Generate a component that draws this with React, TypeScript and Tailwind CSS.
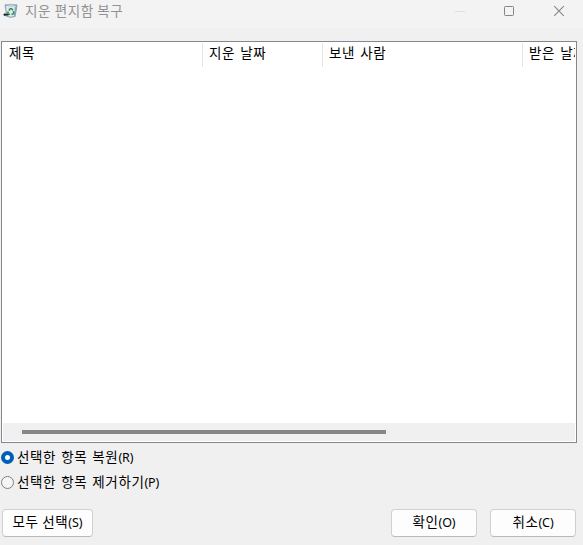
import { useState } from 'react';

const columns = [
  { title: '제목', className: 'w-[200px] border-r' },
  { title: '지운 날짜', className: 'w-[120px] border-r' },
  { title: '보낸 사람', className: 'w-[200px] border-r' },
  { title: '받은 날짜', className: 'w-[120px]' },
];

const options = [
  { value: 'restore', label: '선택한 항목 복원', shortcut: '(R)' },
  { value: 'remove', label: '선택한 항목 제거하기', shortcut: '(P)' },
];

function Label({ text, shortcut }: { text: string; shortcut: string }) {
  return (
    <span className="flex items-baseline whitespace-nowrap">
      <span>{text}</span>
      <span className="font-['Noto_Sans',sans-serif] text-[12.5px] tracking-[-0.1px]">{shortcut}</span>
    </span>
  );
}

function DialogButton({ text, shortcut, className }: { text: string; shortcut: string; className: string }) {
  return (
    <button
      className={`flex h-7 items-center justify-center rounded-[4px] border border-[#d0d0d0] border-b-[#bababa] bg-[#fdfdfd] pb-[2px] ${className}`}
    >
      <Label text={text} shortcut={shortcut} />
    </button>
  );
}

function RecycleBinIcon() {
  return (
    <svg width="16" height="16" viewBox="0 0 16 16" fill="none">
      <path d="M2 2 L14 2 L12 13.5 Q8 15 4 13.5 Z" fill="#dce8ee" stroke="#8799ab" />
      <path d="M2 2.2 Q8 .3 14 2.2 Q8 4 2 2.2Z" fill="#f8fbfd" stroke="#91a3b1" strokeWidth=".8" />
      <path d="M11.8 4 L14 2.5 L12.3 13.5 L11 14Z" fill="#8ea6c0" />
      <path d="M5.9 7.5 L7.2 5.7 H8.7 L9.8 7.3 M10.3 8.3 L11 10 L9.8 11.2 H8.5 M7 11.2 H5.2 L4.7 10 L5.4 8.6" stroke="#2f934b" strokeWidth="1.5" />
      <path d="M0 11.7 L2.5 9.8 V11 H5.5 V12.5 H2.5 V13.6Z" fill="#222b31" />
    </svg>
  );
}

export default function App() {
  const [selected, setSelected] = useState('restore');

  return (
    <div className="flex h-[545px] w-[583px] flex-col overflow-hidden bg-[#f0f0f0] font-['Noto_Sans_CJK_KR',sans-serif] text-[13.5px] leading-5 tracking-[0.6px] text-black [word-spacing:1.5px]">
      <header className="flex h-7 shrink-0 items-start bg-[#f3f3f3]">
        <div className="flex pt-[3px] pl-[3px]">
          <RecycleBinIcon />
        </div>
        <h1 className="ml-[6px] text-[#929292] [word-spacing:0px]">지운 편지함 복구</h1>
        <div className="mt-[5px] mr-[18px] ml-auto flex gap-[38px]">
          {/* minimize is disabled in this dialog */}
          <svg width="12" height="12" viewBox="0 0 12 12">
            <path d="M2 6.5H12" stroke="#dfdfdf" />
          </svg>
          <svg width="12" height="12" viewBox="0 0 12 12" fill="none">
            <rect x="1.5" y="1.5" width="9" height="9" rx=".8" stroke="#858585" />
          </svg>
          <svg width="12" height="12" viewBox="0 0 12 12">
            <path d="M1.2 1.2L10.8 10.8M10.8 1.2L1.2 10.8" stroke="#858585" strokeWidth="1.1" />
          </svg>
        </div>
      </header>

      <div className="mt-[13px] ml-px flex h-[402px] w-[576px] shrink-0 flex-col overflow-hidden border border-[#828790] bg-white p-px">
        <div className="flex h-6 overflow-hidden leading-[18px]">
          {columns.map((column) => (
            <div
              key={column.title}
              className={`shrink-0 border-[#e5e5e5] pl-[6px] whitespace-nowrap ${column.className}`}
            >
              {column.title}
            </div>
          ))}
        </div>
        <div className="mt-auto h-[18px] shrink-0 bg-[#f0f0f0] pt-[7px] pl-[19px]">
          <div className="h-1 w-[364px] bg-[#868686]" />
        </div>
      </div>

      <div className="ml-px flex flex-col gap-[5px] pt-1">
        {options.map((option) => (
          <label key={option.value} className="flex h-5 items-center gap-[3px]">
            <input
              type="radio"
              name="action"
              value={option.value}
              checked={selected === option.value}
              onChange={() => setSelected(option.value)}
              className="size-[13px] appearance-none rounded-full border border-[#808080] bg-[#f5f5f5] checked:border-4 checked:border-[#005fb8] checked:bg-white"
            />
            <Label text={option.label} shortcut={option.shortcut} />
          </label>
        ))}
      </div>

      <footer className="mt-[17px] flex pr-[7px] pl-[2px]">
        <DialogButton text="모두 선택" shortcut="(S)" className="w-[91px]" />
        <DialogButton text="확인" shortcut="(O)" className="ml-auto w-[86px]" />
        <DialogButton text="취소" shortcut="(C)" className="ml-[13px] w-[86px]" />
      </footer>
    </div>
  );
}
